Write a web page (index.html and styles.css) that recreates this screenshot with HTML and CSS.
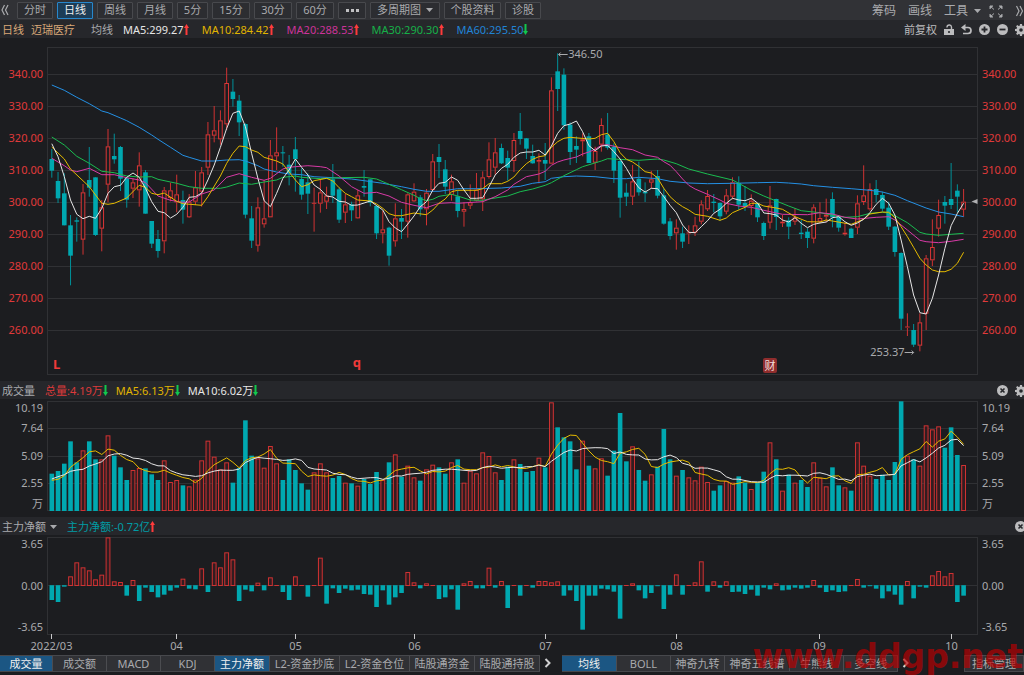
FILE: index.html
```html
<!DOCTYPE html>
<html lang="zh-CN">
<head>
<meta charset="utf-8">
<title>迈瑞医疗 日线</title>
<link rel="stylesheet" href="styles.css">
</head>
<body>
<svg class="defs" aria-hidden="true">
  <symbol id="up" viewBox="0 0 5 11"><path d="M2.500 0 5 4H3.500v7h-2V4H0z"/></symbol>
  <symbol id="down" viewBox="0 0 5 11"><path d="M2.500 11 5 7H3.500V0h-2v7H0z"/></symbol>
  <symbol id="caret" viewBox="0 0 7 4"><path d="M0 0h7L3.500 4z"/></symbol>
  <symbol id="gear" viewBox="0 0 12 12"><path fill-rule="evenodd" d="M5 0h2l.3 1.700 1 .4L9.700 1.100 10.900 2.300 9.900 3.700l.4 1L12 5v2l-1.700.3-.4 1 1 1.400-1.200 1.200-1.400-1-1 .4L7 12H5l-.3-1.700-1-.4-1.400 1L1.100 9.700l1-1.400-.4-1L0 7V5l1.700-.3.4-1-1-1.400L2.300 1.100l1.400 1 1-.4zM6 4.200a1.800 1.800 0 1 0 0 3.600 1.800 1.800 0 0 0 0-3.600z"/></symbol>
  <symbol id="close" viewBox="0 0 11 11"><circle cx="5.500" cy="5.500" r="5.500"/><path d="M3.500 3.500l4 4m0-4l-4 4" stroke="#26272b" stroke-width="1.600"/></symbol>
  <symbol id="next" viewBox="0 0 7 10"><path d="M1.500 1l4 4-4 4" fill="none" stroke="currentColor" stroke-width="2"/></symbol>
</svg>
<div class="app">
  <header class="toolbar">
    <button class="icon-btn first" aria-label="收起"><svg width="8" height="12" viewBox="0 0 8 12"><path d="M3.500 1l-2.500 5 2.500 5M7 1L4.500 6 7 11" fill="none" stroke="currentColor" stroke-width="1.200"/></svg></button>
    <nav class="periods">
      <button>分时</button>
      <button class="on">日线</button>
      <button>周线</button>
      <button>月线</button>
      <button class="narrow">5分</button>
      <button class="mid">15分</button>
      <button class="mid">30分</button>
      <button class="mid">60分</button>
      <button class="more" aria-label="更多周期"><i></i><i></i><i></i></button>
      <button class="wide">多周期图<svg class="caret"><use href="#caret"/></svg></button>
      <button class="info">个股资料</button>
      <button>诊股</button>
    </nav>
    <div class="tools">
      <button>筹码</button>
      <button>画线</button>
      <button class="menu">工具<svg class="caret"><use href="#caret"/></svg></button>
      <button aria-label="全屏"><svg width="14" height="13" viewBox="0 0 14 13" fill="none" stroke="currentColor" stroke-width="1"><path d="M1 4V1h3M1 1l4 3.500M10 1h3v3M13 1L9 4.500M1 9v3h3M1 12l4-3.500M13 9v3h-3M13 12L9 8.500"/></svg></button>
      <button aria-label="展开"><svg width="9" height="12" viewBox="0 0 9 12"><path d="M1.500 1L4 6l-2.500 5M5 1l2.500 5L5 11" fill="none" stroke="currentColor" stroke-width="1.200"/></svg></button>
    </div>
  </header>

  <section class="legend main-legend">
    <span class="gold">日线</span>
    <span class="gold name">迈瑞医疗</span>
    <span class="grey label">均线</span>
    <span class="val white">MA5:299.27<svg class="arw up"><use href="#up"/></svg></span>
    <span class="val yellow">MA10:284.42<svg class="arw up"><use href="#up"/></svg></span>
    <span class="val pink">MA20:288.53<svg class="arw up"><use href="#up"/></svg></span>
    <span class="val green">MA30:290.30<svg class="arw up"><use href="#up"/></svg></span>
    <span class="val blue">MA60:295.50<svg class="arw down"><use href="#down"/></svg></span>
    <div class="actions">
      <button>前复权</button>
      <button aria-label="锁定"><svg width="10" height="11" viewBox="0 0 10 11"><path fill-rule="evenodd" d="M0 5h10v6H0zM4.200 7v2h1.600V7z"/><path d="M3 3.500a2.200 2.200 0 0 1 4.500-.5v2" fill="none" stroke="currentColor" stroke-width="1.400"/></svg></button>
      <button aria-label="撤销"><svg width="11" height="11" viewBox="0 0 11 11"><path d="M2 3.500h5a3 3 0 0 1 0 6H2" fill="none" stroke="currentColor" stroke-width="1.700"/><path d="M4.500 0v7L0 3.500z"/></svg></button>
      <button aria-label="放大"><svg width="11" height="11" viewBox="0 0 11 11"><circle cx="5.500" cy="5.500" r="5.500"/><path d="M5.500 2.500v6m-3-3h6" stroke="#26272b" stroke-width="1.800"/></svg></button>
      <button aria-label="缩小"><svg width="11" height="11" viewBox="0 0 11 11"><circle cx="5.500" cy="5.500" r="5.500"/><path d="M2.500 5.500h6" stroke="#26272b" stroke-width="1.800"/></svg></button>
      <button aria-label="设置"><svg width="12" height="12"><use href="#gear"/></svg></button>
    </div>
  </section>
  <svg class="chart price" id="price" role="img" aria-label="K线图"></svg>

  <section class="legend volume-legend">
    <span class="grey title">成交量</span>
    <span class="val red">总量:4.19万<svg class="arw down"><use href="#down"/></svg></span>
    <span class="val yellow">MA5:6.13万<svg class="arw down"><use href="#down"/></svg></span>
    <span class="val white">MA10:6.02万<svg class="arw down"><use href="#down"/></svg></span>
    <div class="actions">
      <button aria-label="关闭"><svg width="11" height="11"><use href="#close"/></svg></button>
      <button aria-label="设置"><svg width="12" height="12"><use href="#gear"/></svg></button>
    </div>
  </section>
  <svg class="chart volume" id="volume" role="img" aria-label="成交量"></svg>

  <section class="legend">
    <button class="grey title">主力净额<svg class="caret"><use href="#caret"/></svg></button>
    <span class="val teal">主力净额:-0.72亿<svg class="arw up"><use href="#up"/></svg></span>
    <div class="actions">
      <button class="edge" aria-label="关闭"><svg width="11" height="11"><use href="#close"/></svg></button>
    </div>
  </section>
  <svg class="chart net" id="net" role="img" aria-label="主力净额"></svg>

  <footer class="tabs">
    <nav class="group">
      <button class="on w53">成交量</button><button>成交额</button><button>MACD</button><button>KDJ</button><button class="on">主力净额</button><button class="w70">L2-资金抄底</button><button class="w70">L2-资金仓位</button><button class="w65">陆股通资金</button><button class="w65">陆股通持股</button>
    </nav>
    <button class="next" aria-label="更多"><svg width="7" height="10"><use href="#next"/></svg></button>
    <nav class="group">
      <button class="on">均线</button><button>BOLL</button><button>神奇九转</button><button class="w65">神奇五线谱</button><button>牛熊线</button><button>多空线</button>
    </nav>
    <button class="next" aria-label="更多"><svg width="7" height="10"><use href="#next"/></svg></button>
    <button class="manage">指标管理</button>
    <span class="watermark">www.ddgp.net</span>
  </footer>
</div>
<script src="chart.js"></script>
</body>
</html>
```

FILE: styles.css
```css
* { box-sizing: border-box; }
body {
  margin: 0;
  background: #1c1d20;
  color: #a9aaad;
  font: 11px/16px "Noto Sans", "Noto Sans CJK SC", sans-serif;
  overflow: hidden;
}
button {
  margin: 0;
  padding: 0;
  border: 0;
  background: none;
  color: inherit;
  font: inherit;
  white-space: nowrap;
}
svg { display: block; fill: currentColor; }
.defs { position: absolute; width: 0; height: 0; }
.app { display: flex; flex-direction: column; min-height: 100vh; }

.toolbar {
  display: flex;
  align-items: center;
  height: 20px;
  background: #313236;
}
.first { width: 17px; padding-left: 1px; }
.periods { display: flex; gap: 4px; }
.periods button {
  display: flex;
  align-items: center;
  justify-content: center;
  width: 36px;
  height: 17px;
  border: 1px solid #48494d;
  border-radius: 1px;
  background: #2c2d31;
}
.periods .on { border-color: #2787cc; background: #1c3d57; color: #f0f0f0; }
.periods .narrow { width: 31px; }
.periods .mid { width: 38px; }
.periods .more { width: 28px; gap: 2px; }
.periods .wide { width: 70px; gap: 5px; }
.periods .info { width: 57px; }
.more i { width: 3px; height: 3px; background: #c0c0c2; }
.caret { width: 7px; height: 4px; }
.tools {
  display: flex;
  align-items: center;
  gap: 12px;
  margin-left: auto;
  padding-top: 2px;
  font-size: 12px;
}
.tools .menu { display: flex; align-items: center; gap: 6px; margin-right: -4px; }

.legend {
  display: flex;
  align-items: center;
  gap: 10px;
  height: 18px;
  padding: 1px 0 0 2px;
  background: #26272b;
}
.main-legend { gap: 13px; }
.volume-legend { gap: 8px; }
.volume-legend .title { margin-right: 2px; }
.legend button { display: flex; align-items: center; }
.title { gap: 4px; }
.name { margin-left: -6px; }
.label { margin-left: 3px; }
.main-legend .label + .val { margin-left: -3px; }
.val { display: flex; align-items: center; }
.arw { width: 5px; height: 11px; }
.arw.up { color: #ff3b3b; }
.arw.down { color: #12c74d; }
.gold { color: #d9a878; }
.grey { color: #a9aaad; }
.white { color: #e6e6e6; }
.yellow { color: #e0b400; }
.pink { color: #cc3399; }
.green { color: #16b048; }
.blue { color: #2184d6; }
.red { color: #dd3a3a; }
.teal { color: #009ca5; }
.actions {
  display: flex;
  align-items: center;
  gap: 7px;
  margin-left: auto;
  margin-right: -3px;
  color: #bcbcbe;
}
.actions .edge { margin-right: 1px; }

.chart { width: 100%; overflow: hidden; }
.price { height: 343px; }
.volume { height: 118px; }
.net { height: 119px; }
.chart text { font-size: 11px; fill: #a9aaad; }
.chart .axis-price { fill: #e03a3a; }
.frame, .grid { fill: none; stroke: #303134; stroke-width: 1; }
.mark { stroke: #c8c8ca; stroke-width: 1; }
.fall { fill: #00a8b0; stroke: none; }
.fall-wick { stroke: #009098; stroke-width: 1; }
.rise { fill: #1c1d20; stroke: #dc3636; stroke-width: 1; }
.rise-bar { fill: #331c20; stroke: #d03232; stroke-width: 1; }
.rise-wick { stroke: #d03232; stroke-width: 1; }
.line { fill: none; stroke-width: 1; stroke-linejoin: round; }
.l-white { stroke: #e6e6e6; }
.l-yellow { stroke: #e6bb00; }
.l-pink { stroke: #d83aa6; }
.l-green { stroke: #1abc50; }
.l-blue { stroke: #2490e4; }
.chart .flag { fill: #f03a3a; font: bold 13px "Noto Sans", sans-serif; }
.badge { fill: #8f2d2d; }
.chart .badge-text { fill: #f2dede; }
.pointer { fill: #b0b0b2; }
.thin { stroke: #a9aaad; stroke-width: 1; fill: none; }

.tabs {
  position: relative;
  display: flex;
  align-items: center;
  height: 18px;
}
.group {
  display: flex;
  height: 17px;
  border: solid #47484c;
  border-width: 1px 0;
}
.group button {
  width: 54px;
  border-right: 1px solid #4b4c50;
  background: #303135;
}
.group .on { width: 55px; background: #1b5683; color: #f0f0f0; }
.group .w53 { width: 53px; }
.group .w70 { width: 70px; }
.group .w65 { width: 65px; }
.next {
  display: flex;
  justify-content: center;
  width: 14px;
  color: #d0d0d2;
  margin-right: 8px;
}
.manage {
  width: 60px;
  height: 17px;
  margin-left: auto;
  border: 1px solid #48494d;
  background: #303135;
}
.watermark {
  position: absolute;
  right: 1px;
  bottom: -4px;
  color: rgba(190, 0, 0, 0.68);
  font: bold 33px/38px "DejaVu Sans", sans-serif;
  pointer-events: none;
}
```

FILE: chart.js
```js
// Vertical values are chart ticks, three per pixel, measured downwards.
// Each candle: direction (R rise, F fall), high, body top, body bottom, low.
const candles = `F327,357,392,413 F396,423,475,489 F400,460,556,556 F525,556,647,736 F532,541,545,605
R432,457,599,644 F321,420,443,470 F412,412,585,588 R480,502,566,634 R267,319,434,487
F281,348,358,371 F318,321,416,453 F412,415,479,503 R415,427,446,474 R337,376,451,500
F390,397,521,521 F543,543,611,624 F570,597,633,653 R441,451,604,640 R428,451,474,484
R404,463,487,517 F452,480,509,551 R462,485,532,534 R393,442,485,495 R381,397,455,500
R246,283,383,405 R198,271,287,307 R211,241,298,314 R83,129,253,270 F117,155,177,200
F165,182,247,288 F250,252,524,535 F498,535,602,624 R472,502,617,635 R420,535,553,563
R300,346,532,532 R262,337,349,390 F318,337,340,380 F345,374,400,436 F291,328,357,455
F385,417,464,479 F400,427,461,522 R443,490,492,575 R418,457,491,518 R440,467,485,507
F372,418,467,489 F443,448,539,549 R462,493,518,549 F485,493,511,543 R450,466,535,536
F390,438,443,470 F418,418,488,499 F495,498,580,597 R513,568,580,610 F560,563,647,677
R490,535,604,620 F507,534,545,597 R460,463,545,593 R430,455,484,486 F465,472,508,529
R447,458,508,556 R342,364,450,455 F312,351,366,414 F360,388,440,462 R404,424,465,482
F450,469,513,532 R486,507,515,560 R433,487,497,507 R399,449,482,484 R394,412,478,513
R307,358,411,416 R294,337,383,404 F311,324,370,372 F332,354,383,422 R279,300,363,396
F219,273,297,314 F294,295,326,357 F314,348,370,371 R340,360,365,430 F309,360,371,420
R112,151,371,371 F40,94,147,213 F85,104,256,269 F247,254,336,375 F289,318,329,369
R280,298,304,349 F279,289,369,369 R320,333,368,390 R235,255,314,335 F219,284,323,329
F310,320,392,429 F357,363,473,533 F430,458,470,498 R375,424,470,495 F365,416,457,467
F427,455,460,486 R393,418,428,446 F390,408,467,475 F445,466,551,554 F534,544,588,599
R538,563,580,629 F560,580,605,624 R556,579,582,612 R530,556,578,588 R481,493,545,553
R450,468,508,513 F462,485,489,517 F487,489,529,543 R447,466,515,523 R412,427,470,478
F409,429,494,509 F438,489,500,513 R463,482,498,525 F488,489,532,546 F545,549,588,600
R438,496,548,566 F476,477,531,570 R525,545,550,561 F532,541,560,597 R505,532,545,555
F540,578,582,597 F565,575,594,624 R493,502,596,610 R487,534,545,550 R476,524,530,547
F457,477,532,562 F525,530,563,575 R548,578,583,587 F563,566,594,594 R466,490,563,582
R376,466,486,495 R430,447,508,512 F420,447,465,487 F455,465,506,515 F485,503,560,570
F558,560,636,650 F637,639,836,870 R820,861,864,888 F852,870,914,921 R820,847,917,934
R645,655,821,870 R538,621,661,678 R479,525,566,590 F468,486,497,551 F369,477,495,507
F433,452,470,518 R447,485,509,530`.split(/\s+/).map(s => [s[0], ...s.slice(1).split(',').map(Number)]);

const volume = [281,273,251,184,247,211,184,238,238,166,227,262,300,270,264,265,283,300,241,306,300,316,319,299,241,182,230,268,247,308,264,121,227,235,263,198,250,300,238,270,310,329,277,250,277,294,288,308,310,317,297,312,276,300,247,223,290,257,292,302,268,254,262,281,247,238,308,272,280,217,228,277,300,260,238,252,276,273,233,262,67,142,172,184,268,182,257,265,235,287,212,99,244,199,270,302,283,260,147,238,287,270,292,301,260,306,332,316,303,308,289,308,327,307,275,187,238,332,284,308,300,321,247,293,319,262,316,322,332,187,257,287,297,284,300,246,64,227,238,257,136,148,139,203,142,225,255];

const net = [252,258,212,181,139,154,163,190,176,64,196,198,239,192,255,215,228,244,236,224,215,188,218,220,157,228,139,154,109,130,255,221,226,200,223,184,205,228,252,181,207,242,207,125,263,217,231,218,223,221,234,236,273,223,266,244,231,168,199,217,202,207,249,244,220,281,202,195,217,217,155,215,195,276,206,239,204,215,195,195,199,196,239,223,255,341,239,239,218,220,227,308,204,202,223,247,231,210,279,236,175,236,206,199,136,227,196,215,196,228,227,234,221,239,215,220,202,223,221,215,218,215,192,215,228,223,228,226,205,189,215,210,218,247,226,236,266,195,247,212,215,178,165,181,171,258,239];

// Moving averages as "bar index, tick" pairs.
const averages = {
  blue: '0,135 2,151 4,172 6,191 8,213 9,218 11,234 12,242 14,262 16,285 17,298 19,322 21,346 22,352 24,363 26,363 28,360 30,359 31,363 33,377 34,387 36,396 38,402 40,404 42,410 45,413 48,417 50,422 53,430 56,440 58,448 60,454 62,454 65,446 68,446 72,444 75,439 77,430 79,425 80,415 82,410 84,408 87,410 90,416 92,416 94,412 97,416 99,424 102,429 105,431 109,430 113,428 116,427 118,429 120,432 122,437 125,442 128,446 131,451 133,456 135,466 137,482 140,504 142,516 144,522 146,530',
  green: '0,291 2,315 4,349 6,370 8,394 10,398 12,408 14,411 16,410 17,418 19,426 20,430 22,440 24,445 27,445 28,441 30,429 32,433 34,426 36,420 37,412 39,408 40,412 43,416 46,413 50,412 52,417 54,433 56,449 58,466 59,476 60,482 61,478 62,469 64,463 65,468 67,480 69,481 70,477 73,468 75,455 77,447 79,436 80,428 82,407 84,389 85,380 88,363 89,356 92,359 94,361 97,357 98,360 100,371 102,387 105,402 107,411 109,420 110,430 112,451 114,468 116,483 118,498 120,512 123,518 125,526 127,532 129,530 131,520 133,517 134,519 135,527 137,548 139,577 140,582 142,586 144,583 146,580',
  pink: '0,355 2,377 3,390 4,395 6,385 8,404 10,404 12,413 14,420 15,428 17,468 19,481 21,487 22,486 24,462 26,450 28,412 30,401 32,412 34,421 35,415 37,387 38,382 39,380 41,377 43,380 44,383 46,408 48,440 50,460 52,457 54,468 56,487 58,496 60,503 62,490 64,488 65,490 69,485 71,470 73,450 74,433 76,410 78,402 79,394 80,376 81,366 82,360 84,351 85,342 86,336 87,328 88,316 89,314 91,323 93,329 95,345 97,352 98,365 99,376 100,395 101,417 102,436 103,447 105,463 107,480 108,490 110,498 112,502 114,511 116,519 117,523 121,524 123,518 125,522 127,532 129,537 132,532 134,530 135,540 137,570 139,601 140,605 142,608 144,604 146,598',
  yellow: '0,321 2,357 3,387 6,440 8,490 9,493 10,490 12,474 14,436 15,442 16,460 17,464 18,459 20,484 21,491 24,496 25,470 27,408 28,370 29,340 30,318 31,320 32,330 33,337 34,352 36,363 37,372 38,396 39,420 40,440 41,434 42,422 44,415 45,423 46,443 47,460 48,470 49,480 51,483 52,492 53,505 54,521 55,527 56,527 58,519 60,524 61,510 62,490 63,477 64,455 65,451 68,451 69,446 70,431 72,431 73,424 74,411 75,389 76,371 77,358 78,350 79,347 80,322 81,305 82,295 83,292 86,297 87,295 88,284 89,280 90,305 91,338 92,358 93,366 94,379 95,395 96,399 97,414 98,445 99,470 100,487 101,500 102,510 103,523 105,529 107,541 108,534 109,518 111,502 112,490 113,490 114,498 116,504 117,508 119,530 121,545 123,546 124,540 125,543 128,553 130,538 131,522 133,516 134,517 135,533 136,560 137,590 138,622 139,655 140,675 141,690 142,695 143,695 144,688 145,670 146,637',
  white: '0,311 1,350 2,410 3,480 4,523 5,536 6,529 7,535 8,505 9,460 10,440 11,436 12,412 13,399 14,412 15,445 16,485 17,514 18,518 19,534 20,523 21,502 22,472 23,470 24,459 25,420 26,375 27,322 28,265 29,220 30,213 31,260 32,340 33,415 34,482 35,500 36,460 37,415 38,390 39,357 40,382 41,405 42,435 43,448 44,468 45,471 46,484 47,486 48,496 49,495 50,489 51,483 52,497 53,510 54,545 55,564 56,575 57,552 58,528 59,500 60,485 61,450 62,430 63,427 64,411 65,421 66,450 67,475 68,475 69,473 70,440 71,405 72,385 73,373 74,352 75,339 76,336 77,336 78,331 79,345 80,318 81,280 82,257 83,252 84,243 85,275 86,317 87,332 88,318 89,316 90,335 91,357 92,385 93,417 94,443 95,456 96,445 97,446 98,470 99,496 100,518 101,555 102,577 103,578 104,560 105,542 106,520 107,508 108,490 109,475 110,480 111,482 112,475 113,489 114,519 115,521 116,525 117,540 118,546 119,533 120,550 121,563 122,553 123,549 124,546 125,533 126,530 127,545 128,556 129,549 130,538 131,518 132,493 133,475 134,490 135,525 136,600 137,680 138,765 139,818 140,822 141,775 142,705 143,625 144,557 145,520 146,490'
};

function rolling(n, lead) {
  return volume.map((_, i) => i < lead.length ? lead[i]
    : volume.slice(i - n + 1, i + 1).reduce((a, b) => a + b) / n);
}

function draw() {
  const w = document.querySelector('.app').clientWidth;
  const left = 47.5, right = w - 46.5;
  const x = i => 51.8 + i * (w - 112.200) / 146;
  const line = (x1, y1, x2, y2, c) => `<line class="${c}" x1="${x1}" y1="${y1}" x2="${x2}" y2="${y2}"/>`;
  const rect = (a, b, ww, h, c) => `<rect class="${c}" x="${a}" y="${b}" width="${ww}" height="${h}"/>`;
  const text = (a, b, s, anchor, c = '') => `<text class="${c}" x="${a}" y="${b}" text-anchor="${anchor}">${s}</text>`;
  const path = (pts, c) => `<polyline class="line l-${c}" points="${pts.map(p => p.join()).join(' ')}"/>`;
  const labels = (y, s, c) => text(43, Math.floor(y + 4), s, 'end', c) + text(w - 42, Math.floor(y + 4), s, 'start', c);

  // Price panel
  let out = rect(left, 9.5, right - left, 327, 'frame');
  for (let k = 0; k < 9; k++) {
    const y = Math.round(36 + k * 32) + 0.5;
    out += line(left, y, right, y, 'grid') + labels(y, (340 - k * 10).toFixed(2), 'axis-price');
  }
  const py = v => 2 + v / 3;
  candles.forEach(([d, hi, top, bot, lo], i) => {
    const c = x(i), h = (bot - top) / 3;
    if (d === 'F') {
      out += line(c, py(hi), c, py(lo), 'fall-wick') + rect(c - 2.300, py(top), 4.600, Math.max(h, 1), 'fall');
    } else {
      out += line(c, py(hi), c, py(top), 'rise-wick') + line(c, py(bot), c, py(lo), 'rise-wick')
        + (h < 1.500 ? line(c - 2.300, py(top), c + 2.300, py(top), 'rise-wick')
          : rect(c - 1.800, py(top) + 0.5, 3.600, Math.max(h - 1, 0.5), 'rise'));
    }
  });
  for (const name in averages) {
    out += path(averages[name].split(' ').map(p => {
      const [i, v] = p.split(',').map(Number);
      return [x(i).toFixed(1), py(v).toFixed(1)];
    }), name);
  }
  const peak = x(81), low = x(138);
  out += `<path class="thin" d="M${peak + 1} 16.500h9M${peak + 3} 14.500l-2 2 2 2"/>` + text(peak + 10.500, 20, '346.50', 'start');
  out += `<path class="thin" d="M${low - 9} 314.500h9M${low - 2} 312.500l2 2-2 2"/>` + text(low - 9, 318, '253.37', 'end');
  out += text(53, 331, 'L', 'start', 'flag') + text(x(49) - 5, 329, 'q', 'start', 'flag');
  const b = x(115);
  out += `<rect class="badge" x="${b - 7}" y="320" width="14" height="15" rx="2"/>` + text(b, 332, '财', 'middle', 'badge-text');
  out += `<path class="pointer" d="M${right} 161v5l-6-2.500z"/>`;
  document.getElementById('price').innerHTML = out;

  // Volume panel
  const vy = v => v / 3 - 19;
  out = rect(left, 2.5, right - left, 109, 'frame');
  [29.5, 57.5, 84.5].forEach(y => out += line(left, y, right, y, 'grid'));
  [[9.5, '10.19'], [29.5, '7.64'], [57, '5.09'], [84, '2.55'], [105, '万']].forEach(a => out += labels(...a));
  volume.forEach((v, i) => {
    const c = x(i), y = vy(v), h = 112 - y;
    out += candles[i][0] === 'F' ? rect(c - 2.300, y, 4.600, h, 'fall') : rect(c - 1.900, y + 0.5, 3.800, h - 1, 'rise-bar');
  });
  const series = a => a.map((v, i) => [x(i).toFixed(1), vy(v).toFixed(1)]);
  out += path(series(rolling(5, [301, 298, 287, 262])), 'yellow');
  out += path(series(rolling(10, [297, 290, 284, 274, 270, 268, 258, 252, 245])), 'white');
  document.getElementById('volume').innerHTML = out;

  // Net inflow panel with the shared time axis
  out = rect(left, 2.5, right - left, 97, 'frame') + line(left, 50.5, right, 50.5, 'grid');
  [[9.5, '3.65'], [51, '0.00'], [92.5, '-3.65']].forEach(a => out += labels(...a));
  net.forEach((v, i) => {
    const c = x(i), y = vy(v);
    if (v >= 208) out += rect(c - 2.300, 50.2, 4.600, Math.max(y - 50.2, 1), 'fall');
    else if (v > 203) out += line(c - 2.300, 50.5, c + 2.300, 50.5, 'rise-wick');
    else out += rect(c - 1.900, y + 0.5, 3.800, 50 - y, 'rise-bar');
  });
  [[0, '2022/03'], [20, '04'], [39, '05'], [58, '06'], [79, '07'], [100, '08'], [123, '09'], [144, '10']].forEach(([i, s]) => {
    const c = Math.floor(x(i)) + 0.5;
    out += line(c, 99, c, 104, 'mark') + text(c, 115, s, 'middle');
  });
  document.getElementById('net').innerHTML = out;
}
draw();
addEventListener('resize', draw);
```
